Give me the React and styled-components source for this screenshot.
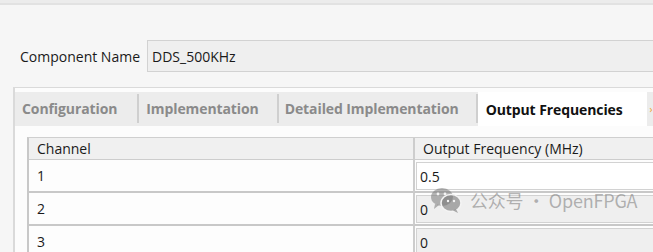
import React from "react"
import styled, { createGlobalStyle } from "styled-components"

const GlobalStyle = createGlobalStyle`
  html, body {
    margin: 0;
    padding: 0;
    background: #f5f5f5;
    overflow: hidden;
  }
  body {
    font-family: "Open Sans", "Noto Sans", sans-serif;
    color: #1a1a1a;
  }
`

const Page = styled.div`
  width: 653px;
  height: 252px;
  overflow: hidden;
  position: relative;
  background: #f6f6f6;
`

const TopBar = styled.div`
  height: 3px;
  background: #ececec;
  border-bottom: 2px solid #e2e2e2;
`

const NameRow = styled.div`
  display: flex;
  align-items: center;
  padding: 35px 0 0 20px;
  height: 32px;
`

const Label = styled.span`
  font-size: 14px;
  width: 127px;
  white-space: nowrap;
`

const NameInput = styled.div`
  flex: 1;
  height: 30px;
  margin-right: -20px;
  border: 1px solid #d2d2d2;
  background: #efefef;
  font-size: 14px;
  display: flex;
  align-items: center;
  padding-left: 4px;
`

const Panel = styled.div`
  margin: 15px -20px 0 13px;
  border-top: 1px solid #dadada;
  border-left: 2px solid #dadada;
  background: #fcfcfc;
  height: 200px;
`

const TabStrip = styled.div`
  display: flex;
  align-items: stretch;
  height: 34px;
  margin-top: 4px;
  background: #ececec;
`

const Tab = styled.div`
  display: flex;
  align-items: center;
  padding: 0 ${({ $pad }) => $pad}px 0 ${({ $lead }) => $lead}px;
  font-size: 14px;
  font-weight: 700;
  letter-spacing: -0.1px;
  color: ${({ $active }) => ($active ? "#111" : "#8a8a8a")};
  background: ${({ $active }) => ($active ? "#ffffff" : "transparent")};
  border-right: ${({ $sep }) => ($sep ? "2px solid #cfcfcf" : "none")};
  margin: ${({ $active }) => ($active ? "0" : "2px 0 3px")};
  white-space: nowrap;
`

const Arrow = styled.span`
  color: #f0a030;
  font-size: 10px;
  align-self: center;
  margin-left: 3px;
`

const TableWrap = styled.div`
  padding: 11px 0 0 12px;
`

const Table = styled.div`
  border-top: 1px solid #cfcfcf;
  border-left: 2px solid #c8c8c8;
  display: grid;
  grid-template-columns: 384px 1fr;
`

const HeadCell = styled.div`
  height: 21px;
  background: #f0f0f0;
  font-size: 14px;
  display: flex;
  align-items: center;
  padding-left: ${({ $pl }) => $pl}px;
  border-bottom: 1px solid #cdcdcd;
  border-left: ${({ $divider }) => ($divider ? "2px solid #cdcdcd" : "none")};
  white-space: nowrap;
`

const Cell = styled.div`
  font-size: 14px;
  display: flex;
  align-items: center;
  padding-left: 8px;
  background: #fdfdfd;
  border-bottom: 2px solid #c8c8c8;
  box-sizing: border-box;
  height: 33px;
`

const ValueCell = styled.div`
  height: 33px;
  box-sizing: border-box;
  border-left: 2px solid #cdcdcd;
  border-bottom: 2px solid #c8c8c8;
  padding: 2px 0 1px 1px;
  background: #fdfdfd;
`

const ValueBox = styled.div`
  height: 100%;
  box-sizing: border-box;
  border: 1px solid #d2d2d2;
  background: ${({ $editable }) => ($editable ? "#ffffff" : "#efefef")};
  font-size: 14px;
  display: flex;
  align-items: center;
  padding-left: 3px;
`

const Watermark = styled.div`
  position: absolute;
  left: 430px;
  top: 186px;
  display: flex;
  align-items: center;
  gap: 8px;
  color: rgba(120, 120, 120, 0.55);
  font-family: "Noto Sans CJK SC", "Noto Sans", sans-serif;
  font-size: 18px;
  letter-spacing: -0.2px;
  white-space: nowrap;
  pointer-events: none;
`

const WeChat = () => (
  <svg width="32" height="28" viewBox="0 0 32 28">
    <ellipse cx="12" cy="11" rx="11" ry="9" fill="rgba(120,120,120,0.55)" />
    <path d="M5 18 L4 23 L9 19 Z" fill="rgba(120,120,120,0.55)" />
    <ellipse cx="21" cy="17" rx="10" ry="8.5" fill="rgba(120,120,120,0.6)" stroke="#f4f4f4" strokeWidth="1.5" />
    <path d="M26 23 L28 27 L23 24.5 Z" fill="rgba(120,120,120,0.6)" />
    <circle cx="8" cy="8" r="1.4" fill="#f4f4f4" />
    <circle cx="15" cy="8" r="1.4" fill="#f4f4f4" />
    <circle cx="18" cy="15" r="1.2" fill="#f4f4f4" />
    <circle cx="24" cy="15" r="1.2" fill="#f4f4f4" />
  </svg>
)

const rows = [
  { channel: "1", value: "0.5", editable: true },
  { channel: "2", value: "0" },
  { channel: "3", value: "0" },
]

const App = () => {
  return (
    <Page>
      <GlobalStyle />
      <TopBar />
      <NameRow>
        <Label>Component Name</Label>
        <NameInput>DDS_500KHz</NameInput>
      </NameRow>
      <Panel>
        <TabStrip>
          <Tab $lead={7} $pad={20} $sep>Configuration</Tab>
          <Tab $lead={7} $pad={18} $sep>Implementation</Tab>
          <Tab $lead={6} $pad={17} $sep>Detailed Implementation</Tab>
          <Tab $lead={8} $pad={24} $active>Output Frequencies</Tab>
          <Arrow>›</Arrow>
        </TabStrip>
        <TableWrap>
          <Table>
            <HeadCell $pl={8}>Channel</HeadCell>
            <HeadCell $pl={8} $divider>Output Frequency (MHz)</HeadCell>
            {rows.map(r => (
              <React.Fragment key={r.channel}>
                <Cell>{r.channel}</Cell>
                <ValueCell>
                  <ValueBox $editable={r.editable}>{r.value}</ValueBox>
                </ValueCell>
              </React.Fragment>
            ))}
          </Table>
        </TableWrap>
      </Panel>
      <Watermark>
        <WeChat />
        <span>公众号 · OpenFPGA</span>
      </Watermark>
    </Page>
  )
}

export default App
